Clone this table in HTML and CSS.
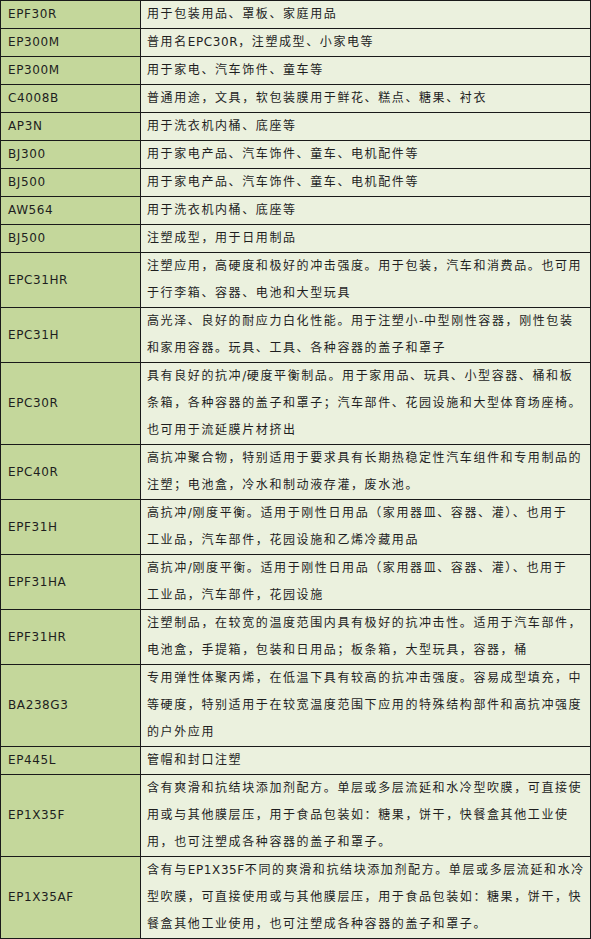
FILE: index.html
```html
<!DOCTYPE html>
<html lang="zh-CN">
<head>
<meta charset="utf-8">
<title>牌号用途</title>
<link rel="stylesheet" href="styles.css">
</head>
<body>
<table class="grades">
<colgroup><col class="col-name"><col class="col-use"></colgroup>
<tbody>
<tr><td class="name">EPF30R</td><td class="use">用于包装用品、罩板、家庭用品</td></tr>
<tr><td class="name">EP300M</td><td class="use">普用名<span class="lat">EPC30R</span>，注塑成型、小家电等</td></tr>
<tr><td class="name">EP300M</td><td class="use">用于家电、汽车饰件、童车等</td></tr>
<tr><td class="name">C4008B</td><td class="use">普通用途，文具，软包装膜用于鲜花、糕点、糖果、衬衣</td></tr>
<tr><td class="name">AP3N</td><td class="use">用于洗衣机内桶、底座等</td></tr>
<tr><td class="name">BJ300</td><td class="use">用于家电产品、汽车饰件、童车、电机配件等</td></tr>
<tr><td class="name">BJ500</td><td class="use">用于家电产品、汽车饰件、童车、电机配件等</td></tr>
<tr><td class="name">AW564</td><td class="use">用于洗衣机内桶、底座等</td></tr>
<tr><td class="name">BJ500</td><td class="use">注塑成型，用于日用制品</td></tr>
<tr><td class="name">EPC31HR</td><td class="use">注塑应用，高硬度和极好的冲击强度。用于包装，汽车和消费品。也可用<br>于行李箱、容器、电池和大型玩具</td></tr>
<tr><td class="name">EPC31H</td><td class="use">高光泽、良好的耐应力白化性能。用于注塑小<span class="lat">-</span>中型刚性容器，刚性包装<br>和家用容器。玩具、工具、各种容器的盖子和罩子</td></tr>
<tr><td class="name">EPC30R</td><td class="use">具有良好的抗冲<span class="lat">/</span>硬度平衡制品。用于家用品、玩具、小型容器、桶和板<br>条箱，各种容器的盖子和罩子；汽车部件、花园设施和大型体育场座椅。<br>也可用于流延膜片材挤出</td></tr>
<tr><td class="name">EPC40R</td><td class="use">高抗冲聚合物，特别适用于要求具有长期热稳定性汽车组件和专用制品的<br>注塑；电池盒，冷水和制动液存灌，废水池。</td></tr>
<tr><td class="name">EPF31H</td><td class="use">高抗冲<span class="lat">/</span>刚度平衡。适用于刚性日用品（家用器皿、容器、灌）、也用于<br>工业品，汽车部件，花园设施和乙烯冷藏用品</td></tr>
<tr><td class="name">EPF31HA</td><td class="use">高抗冲<span class="lat">/</span>刚度平衡。适用于刚性日用品（家用器皿、容器、灌）、也用于<br>工业品，汽车部件，花园设施</td></tr>
<tr><td class="name">EPF31HR</td><td class="use">注塑制品，在较宽的温度范围内具有极好的抗冲击性。适用于汽车部件，<br>电池盒，手提箱，包装和日用品；板条箱，大型玩具，容器，桶</td></tr>
<tr><td class="name">BA238G3</td><td class="use">专用弹性体聚丙烯，在低温下具有较高的抗冲击强度。容易成型填充，中<br>等硬度，特别适用于在较宽温度范围下应用的特殊结构部件和高抗冲强度<br>的户外应用</td></tr>
<tr><td class="name">EP445L</td><td class="use">管帽和封口注塑</td></tr>
<tr><td class="name">EP1X35F</td><td class="use">含有爽滑和抗结块添加剂配方。单层或多层流延和水冷型吹膜，可直接使<br>用或与其他膜层压，用于食品包装如：糖果，饼干，快餐盒其他工业使<br>用，也可注塑成各种容器的盖子和罩子。</td></tr>
<tr><td class="name">EP1X35AF</td><td class="use">含有与<span class="lat">EP1X35F</span>不同的爽滑和抗结块添加剂配方。单层或多层流延和水冷<br>型吹膜，可直接使用或与其他膜层压，用于食品包装如：糖果，饼干，快<br>餐盒其他工业使用，也可注塑成各种容器的盖子和罩子。</td></tr>
</tbody>
</table>
</body>
</html>
```

FILE: styles.css
```css
html, body {
  margin: 0;
  padding: 0;
  background: #ffffff;
}

.grades {
  border-collapse: collapse;
  width: 590px;
  table-layout: fixed;
  font-family: "DejaVu Sans", "Noto Sans CJK SC", sans-serif;
  font-size: 12px;
  color: #1e1e1e;
}

.col-name { width: 140px; }
.col-use { width: 450px; }

.grades td {
  border: 1px solid #1a1a1a;
  line-height: 27px;
  vertical-align: middle;
  white-space: nowrap;
}

.grades td.name {
  background: #c4d79b;
  padding: 0 5px 0 7px;
  letter-spacing: 0.6px;
}

.grades td.use {
  background: #ebf1de;
  padding: 0 4px 0 6px;
  letter-spacing: 1.6px;
}

.grades td.use .lat {
  letter-spacing: 0.6px;
}
```
